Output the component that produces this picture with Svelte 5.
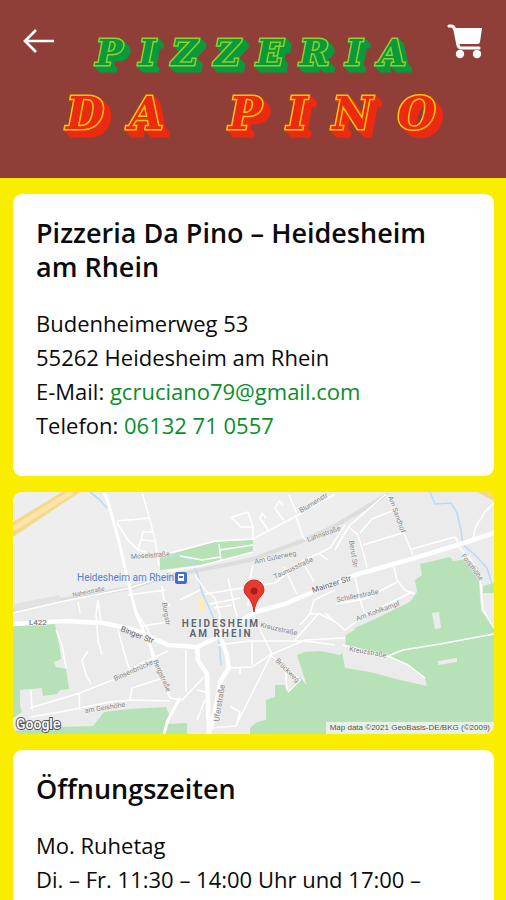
<script>
  const mail = 'gcruciano79@gmail.com';
  const phone = '06132 71 0557';

  const roads = [
    'M142 492L150 520L155 540L159 566',
    'M117 521L150 518',
    'M117 523L128 540L138 550L146 552',
    'M138 549L141 540L155 541M141 540L143 532L152 532',
    'M13 613L60 602L130 588L165 576',
    'M78 602L80 613M98 600L101 622M162 586L164 600L170 606',
    'M128 595L165 590',
    'M98 600L96 613L98 640L102 655',
    'M118 630L124 652L129 668',
    'M137 613L148 630L152 655L161 675L170 698L182 700L205 676',
    'M88 651L82 660L86 675L91 684',
    'M56 630L62 645L66 668',
    'M30 708L80 693L115 679L140 664L168 651',
    'M31 690L32 710M79 694L80 711M30 717L60 712L110 702L132 700L170 701M130 700L132 688L160 679',
    'M142 626L168 622',
    'M186 650L186 692M197 690L206 692M197 720L205 700',
    'M229 668L252 667L270 655L305 640L345 638',
    'M218 645L250 641L305 641L335 645',
    'M252 641L252 665M240 668L240 674',
    'M236 726L270 657L271 652L265 640L258 625L253 613',
    'M270 655L287 668L300 680L288 692',
    'M285 665L287 690',
    'M210 728L236 726L240 712L230 706',
    'M160 556L215 541L253 539L300 514L335 494',
    'M296 516L303 537L306 540',
    'M232 517L248 512L253 527L241 527L231 517M253 526L253 540',
    'M268 530L260 518L262 513L266 518M284 521L275 508L279 501L283 505M297 514L289 495',
    'M168 571L200 566L253 552',
    'M180 556L202 560L220 557M219 544L221 560M220 550L253 545',
    'M195 575L205 590L215 598L220 615L220 635',
    'M205 594L230 590L275 583L302 561L330 548L345 525',
    'M284 567L297 594M302 561L314 582M318 553L328 560',
    'M210 604L240 598M228 578L234 605L238 620M253 565L250 580L248 606',
    'M180 600L200 590M214 608L232 605',
    'M335 550L349 526L386 494',
    'M349 527L358 535L364 555L367 568M360 533L372 519L392 511',
    'M363 545L402 533M387 495L395 515L403 531L413 555',
    'M412 549L455 537L458 542M473 540L475 528L485 512L494 503',
    'M355 577L361 603L366 617M394 567L397 580L405 590L415 594',
    'M336 604L365 599L397 582',
    'M300 625L310 614L320 614L335 622M310 614L314 600L335 590',
    'M318 614L295 640M325 613L345 630L365 615L412 592',
    'M459 547L473 562L480 577L483 610L494 628',
    'M388 656L403 650L440 644L494 634',
    'M343 645L388 656L408 665L425 678'
  ];

  const labels = [
    ['Moselstraße', 131, 559, -4, 7],
    ['Naheistraße', 73, 597, -12, 6],
    ['Blumenstr', 301, 513, -31, 7],
    ['Lahnstraße', 308, 542, -20, 7],
    ['Am Güterweg', 255, 564, -12, 7],
    ['Taunusstraße', 275, 579, -25, 7],
    ['Schillerstraße', 337, 602, -11, 7],
    ['Am Kohlkampf', 357, 621, -20, 7],
    ['Am Sandhof', 388, 497, 70, 7],
    ['Beruf Str', 349, 541, 81, 7],
    ['Forsthöhe', 461, 556, 53, 7],
    ['Kreuzstraße', 260, 627, 13, 7],
    ['Kreuzstraße', 349, 651, 10, 7],
    ['Brückweg', 275, 661, 45, 7],
    ['Binsenbrücke', 115, 681, -24, 7],
    ['Bergstraße', 153, 661, 66, 7],
    ['am Geishöhe', 85, 713, -9, 7],
    ['Burgstr', 162, 603, 80, 7],
    ['Uferstraße', 219, 722, -81, 8]
  ];
</script>

<svelte:head><title>Pizzeria Da Pino</title></svelte:head>

<header>
  <button aria-label="Zurück">
    <svg width="32" height="28" viewBox="0 0 32 28"><path d="M31 14H2M13 3L2 14L13 25" fill="none" stroke="#fff" stroke-width="2.7"/></svg>
  </button>
  <h1><span class="top">PIZZERIA</span><span class="name">DA PINO</span></h1>
  <button aria-label="Warenkorb">
    <svg width="36" height="38" viewBox="0 0 36 38" fill="#fff">
      <path d="M2 4H4Q7 4 8 8L11 23Q12 26 14 26H32" fill="none" stroke="#fff" stroke-width="3.2" stroke-linecap="round"/>
      <path d="M8 6H35L33 20Q32.600 22 30.500 22H11Z"/>
      <circle cx="13" cy="32" r="4.200"/><circle cx="30" cy="32" r="4.200"/>
    </svg>
  </button>
</header>

<main>
  <section class="card contact">
    <h2>Pizzeria Da Pino – Heidesheim am Rhein</h2>
    <address>
      Budenheimerweg 53<br />
      55262 Heidesheim am Rhein<br />
      E-Mail: <a href="mailto:{mail}">{mail}</a><br />
      Telefon: <a href="tel:06132710557">{phone}</a>
    </address>
  </section>

  <svg class="map" viewBox="13 492 481 242" role="img" aria-label="Karte von Heidesheim am Rhein">
    <rect x="13" y="492" width="481" height="242" fill="#ebebeb"/>
    <path d="M13 492H387L330 526L255 556L13 610Z" fill="#eeeeee"/>

    <g fill="#b7e2b7">
      <path d="M13 625L55 624L60 650L61 659L54 662L56 667L66 669L69 689L60 690L57 694L43 696L42 688L20 690L20 705L22 712L13 718Z"/>
      <path d="M13 734V731L60 727L93 726L104 712L130 709L166 707L169 714L168 724L187 723V734Z"/>
      <path d="M160 556L215 542L253 540V552L200 565L160 570Z"/>
      <path d="M420 564L450 557L453 561L468 559L478 568L481 610L494 628V734H250V728L257 722L266 720V700L275 697V685H285L287 692L300 677L307 686L297 655L305 652L320 651L340 655L345 650L344 636L350 630L375 619L410 602L417 592L415 580L422 575Z"/>
      <path d="M483 586L494 583V593H483Z"/>
    </g>
    <g fill="#ebebeb">
      <path d="M341 645L388 656L408 665L425 678L427 686L400 680L370 672L345 668Z"/>
      <path d="M432 613L439 612L441 628L435 629ZM438 661L457 658V662L438 665ZM337 646L345 626L356 629L346 635L345 648Z"/>
    </g>
    <path d="M198 598L204 597L205 611L198 612Z" fill="#f8edc3"/>

    <g fill="none" stroke="#dddddd">
      <path d="M13 610L60 600L130 588L165 577L250 560L300 542L335 526L388 494" stroke-width="4"/>
      <path d="M15 608L60 599" stroke-width="8" stroke="#e2e2e2"/>
    </g>
    <g fill="none" stroke="#b9dcf5" stroke-width="1.600">
      <path d="M90 492L99 499L107 508"/>
      <path d="M430 492L435 504L451 503L457 513L461 530L463 545L475 555L487 568L492 584"/>
      <path d="M162 557L180 555L190 560L197 572L202 592L210 610L218 630L221 665"/>
    </g>

    <path d={roads.join('')} fill="none" stroke="#fff" stroke-width="1.500" stroke-linejoin="round"/>
    <g fill="none" stroke="#fff" stroke-linejoin="round">
      <path d="M104 492L109 505L119 542L129 585L136 613L150 646L169 694" stroke-width="3"/>
      <path d="M13 624L65 621L103 623L135 630L168 645L197 647L220 636L245 618L255 612L285 604L310 593L355 575L415 558L470 541L494 533" stroke-width="4.500"/>
      <path d="M197 646L198 660L207 674L209 734M220 636L227 655L229 668L221 680L215 710L210 731" stroke-width="4.500"/>
      <path d="M180 698L168 720L164 734" stroke-width="3"/>
    </g>
    <path d="M13 522L62 492H80L13 537Z" fill="#f5d88b"/>
    <path d="M13 529L72 492" stroke="#fbe5a9" stroke-width="5"/>
    <path d="M477 492L494 501V492Z" fill="#f5d88b"/>

    <g class="street">
      {#each labels as [name, x, y, turn, size]}
        <text {x} {y} font-size={size} transform="rotate({turn} {x} {y})">{name}</text>
      {/each}
    </g>
    <g class="street major">
      <text x="29" y="625" font-size="8">L422</text>
      <text x="120" y="631" font-size="8" transform="rotate(21 120 631)">Binger Str</text>
      <text x="313" y="593" font-size="8" transform="rotate(-18 313 593)">Mainzer Str</text>
    </g>
    <g class="town" text-anchor="middle">
      <text x="221" y="627">HEIDESHEIM</text>
      <text x="221" y="637">AM RHEIN</text>
    </g>
    <text class="station" x="77" y="581">Heidesheim am Rhein</text>
    <rect x="175" y="572" width="12" height="12" rx="2" fill="#3f6fd1"/>
    <path d="M178 574H184V581H178ZM179 576V578H183V576Z" fill="#fff" fill-rule="evenodd"/>

    <path d="M254 612Q253 602 247 596Q244 593 244 590A10 10 0 0 1 264 590Q264 593 261 596Q255 602 254 612Z" fill="#e8392f" stroke="#c6281f"/>
    <circle cx="254" cy="591" r="3.500" fill="#a51f19"/>
    <rect x="326" y="722" width="168" height="12" fill="#f4f5f4" opacity=".8"/>
    <text class="credit" x="490" y="730" text-anchor="end">Map data ©2021 GeoBasis-DE/BKG (©2009)</text>
    <text class="google" x="16" y="729">Google</text>
  </svg>

  <section class="card">
    <h2>Öffnungszeiten</h2>
    <p>Mo. Ruhetag<br />Di. – Fr. 11:30 – 14:00 Uhr und 17:00 –</p>
  </section>
</main>

<style>
  :global(body) {
    margin: 0;
    background: #faed00;
    color: #0b0b0b;
    font-family: "Open Sans", "Noto Sans", sans-serif;
  }
  :global(html) { scrollbar-width: none; }
  header {
    display: flex;
    justify-content: space-between;
    align-items: flex-start;
    box-sizing: border-box;
    height: 178px;
    padding: 22px 23px;
    background: #8f3e38;
  }
  button {
    display: flex;
    padding: 0;
    border: 0;
    background: none;
    cursor: pointer;
  }
  button:first-child { padding-top: 5px; }
  h1 {
    display: flex;
    flex-direction: column;
    align-items: center;
    margin: 0;
    padding-top: 4px;
    font-family: "DejaVu Serif", serif;
    font-weight: 700;
    font-style: italic;
    white-space: nowrap;
    -webkit-text-stroke-width: 3px;
    paint-order: stroke fill;
  }
  /* The negative margin drops the tracking after the last letter,
     the chained shadows build the solid block behind the letters. */
  .top {
    margin-right: -16px;
    color: #0a9a3c;
    font-size: 36px;
    line-height: 52px;
    letter-spacing: 16px;
    -webkit-text-stroke-color: #8fcf2c;
    filter: drop-shadow(1px 1px #0a9a3c) drop-shadow(2px 2px #0a9a3c) drop-shadow(3px 3px #0a9a3c);
  }
  .name {
    margin-right: -25px;
    color: #ec2a12;
    font-size: 44px;
    line-height: 72px;
    letter-spacing: 25px;
    -webkit-text-stroke-color: #ffc400;
    filter: drop-shadow(1px 1px #ec2a12) drop-shadow(2px 2px #ec2a12) drop-shadow(4px 4px #ec2a12);
  }
  main {
    display: flex;
    flex-direction: column;
    gap: 16px;
    padding: 16px 12px 16px 13px;
  }
  .card {
    padding: 22px 23px;
    border-radius: 9px;
    background: #fff;
  }
  .contact { padding-bottom: 34px; }
  h2 {
    margin: 0 0 22px;
    font-size: 27px;
    font-weight: 600;
    line-height: 34px;
  }
  address, p {
    margin: 0;
    font-size: 22px;
    font-style: normal;
    line-height: 34px;
  }
  a {
    color: #078f2b;
    text-decoration: none;
  }
  .map {
    display: block;
    width: 100%;
    border-radius: 9px;
    font-family: Roboto, sans-serif;
  }
  .street {
    fill: #858585;
    stroke: #f3f3f3;
    stroke-width: 1px;
    paint-order: stroke;
  }
  .major { fill: #666; }
  .town {
    fill: #5d6870;
    stroke: #f3f3f3;
    stroke-width: 1px;
    paint-order: stroke;
    font-size: 10px;
    font-weight: 700;
    letter-spacing: 2px;
  }
  .station {
    fill: #527fd6;
    font-size: 10px;
  }
  .credit {
    fill: #555;
    font-family: "Liberation Sans", sans-serif;
    font-size: 8px;
  }
  .google {
    fill: #fff;
    stroke: #555;
    stroke-width: 2px;
    paint-order: stroke;
    font-size: 14px;
    font-weight: 500;
  }
</style>
